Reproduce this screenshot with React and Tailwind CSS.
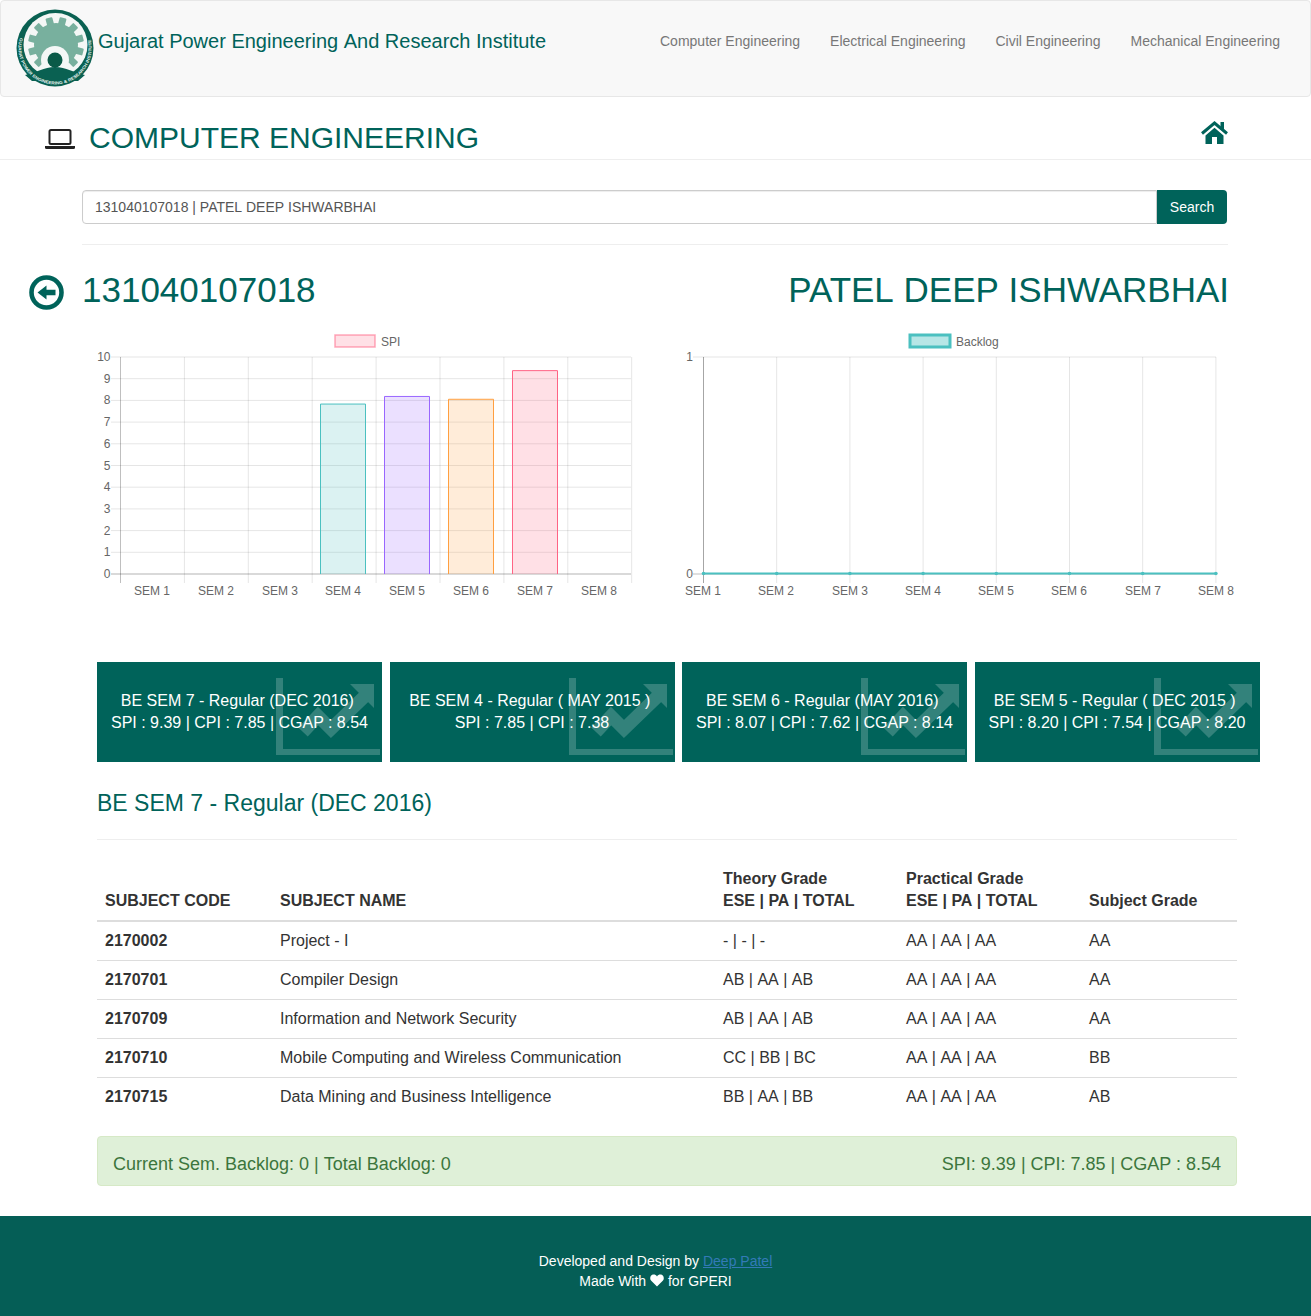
import React from "react";

const TEAL = "#00635a";
const FONT = "[font-family:'Liberation_Sans',Arial,sans-serif]";
const SEMS = ["SEM 1", "SEM 2", "SEM 3", "SEM 4", "SEM 5", "SEM 6", "SEM 7", "SEM 8"];
const LEFT_X = [134, 198, 262, 325, 389, 453, 517, 581];
const RIGHT_X = [685, 758, 832, 905, 978, 1051, 1125, 1198];
const nb = (s) => s.replace(/ /g, "\u00a0");

function Logo() {
  const teeth = Array.from({ length: 12 }, (_, i) => i * 30);
  return (
    <svg width="78" height="78" viewBox="0 0 78 78" className="shrink-0">
      <defs>
        <path id="ringText" d="M 3.9 28.9 A 36.5 36.5 0 1 0 74.1 28.9" />
      </defs>
      <circle cx="39" cy="39" r="38.5" fill="#0a6152" />
      <circle cx="39.5" cy="36" r="32" fill="#f4f7f6" />
      <g fill="#78b09e">
        <circle cx="40" cy="36" r="22" />
        {teeth.map((a) => (
          <rect key={a} x="36.5" y="8" width="7" height="9" rx="1" transform={`rotate(${a + 15} 40 36)`} />
        ))}
      </g>
      <circle cx="39" cy="51" r="14" fill="#f4f7f6" />
      <path d="M9 66 C20 64 28 58 39 58 C50 58 58 64 69 66 L62 72 L16 72 Z" fill="#0a6152" />
      <circle cx="39" cy="51" r="7.5" fill="#0a5a48" />
      <text fontSize="4.2" fontWeight="700" fill="#e8f2ef" fontFamily="'Liberation Sans', sans-serif">
        <textPath href="#ringText" textLength="133" lengthAdjust="spacingAndGlyphs">GUJARAT POWER ENGINEERING &amp; RESEARCH INSTITUTE</textPath>
      </text>
    </svg>
  );
}

function Laptop() {
  return (
    <svg width="30" height="20" viewBox="0 0 30 20" className="shrink-0">
      <rect x="4.5" y="1" width="21" height="14" rx="1.5" fill="none" stroke="#222" strokeWidth="2" />
      <path d="M0 17 H30 V18.5 Q30 20 28.5 20 H1.5 Q0 20 0 18.5 Z" fill="#222" />
    </svg>
  );
}

function Home() {
  return (
    <svg width="27" height="23" viewBox="0 0 27 23" className="block">
      <rect x="19.5" y="1" width="3.5" height="8" fill={TEAL} />
      <path d="M1 12.5 L13.5 2 L26 12.5" fill="none" stroke={TEAL} strokeWidth="3" />
      <path d="M4.5 14.5 L13.5 6.8 L22.5 14.5 V23 H16 V16 H11 V23 H4.5 Z" fill={TEAL} />
    </svg>
  );
}

function Back() {
  return (
    <svg width="35" height="35" viewBox="0 0 35 35" className="mt-[4px] shrink-0">
      <circle cx="17.5" cy="17.5" r="15" fill="none" stroke={TEAL} strokeWidth="4.6" />
      <path d="M8.5 17.5 L17.5 10.5 V14.8 H26.5 V20.2 H17.5 V24.5 Z" fill={TEAL} />
    </svg>
  );
}

function Trend() {
  return (
    <svg className="absolute left-[179px] top-[16px] pointer-events-none" width="106" height="78" viewBox="0 0 106 78">
      <g opacity="0.2">
        <path d="M0 0 H7 V71 H104 V77 H0 Z" fill="#fff" />
        <path d="M27 54 L42 38 L55 51 L89 18" fill="none" stroke="#fff" strokeWidth="13" />
        <path d="M74 6 H98 V30 Z" fill="#fff" />
      </g>
    </svg>
  );
}

function Heart() {
  return (
    <svg width="14" height="13" viewBox="0 0 15 14" className="inline-block align-[-1px]">
      <path d="M7.5 13.5 L1.3 7.4 C-0.5 5.4 0 2.3 2 1.1 C3.9 0 6.3 0.6 7.5 2.6 C8.7 0.6 11.1 0 13 1.1 C15 2.3 15.5 5.4 13.7 7.4 Z" fill="#fff" />
    </svg>
  );
}

function SpiChart() {
  const x0 = 120.5, y0 = 574, stepX = 63.9, stepY = 21.7;
  const bars = [
    [3, 7.85, "75,192,192"],
    [4, 8.2, "153,102,255"],
    [5, 8.07, "255,159,64"],
    [6, 9.39, "255,99,132"],
  ];
  return (
    <svg width="573" height="300" viewBox="82 325 573 300" className="shrink-0 block">
      <rect x="335" y="335" width="40" height="12" fill="rgba(255,99,132,0.2)" stroke="rgba(255,99,132,0.55)" strokeWidth="1.5" />
      <text x="381" y="345.5" fontSize="12" fill="#666">SPI</text>
      {Array.from({ length: 11 }, (_, i) => (
        <g key={i}>
          <line x1="111" x2="631" y1={y0 - i * stepY} y2={y0 - i * stepY} stroke={i === 0 ? "rgba(0,0,0,0.3)" : "rgba(0,0,0,0.1)"} />
          <text x="110.5" y={y0 - i * stepY + 4} fontSize="12" fill="#666" textAnchor="end">{i}</text>
        </g>
      ))}
      {Array.from({ length: 9 }, (_, i) => (
        <line key={i} x1={x0 + i * stepX} x2={x0 + i * stepX} y1="357" y2="583" stroke={i === 0 ? "rgba(0,0,0,0.25)" : "rgba(0,0,0,0.1)"} />
      ))}
      {bars.map(([i, v, c]) => {
        const top = y0 - v * stepY + 0.4;
        const left = Math.floor(x0 + stepX * (i + 0.5) - 23.5) + 0.5;
        return (
          <path key={i} d={`M${left} ${y0} V${top} H${left + 45} V${y0}`} fill={`rgba(${c},0.2)`} stroke={`rgb(${c})`} />
        );
      })}
      {SEMS.map((s, i) => (
        <text key={s} x={LEFT_X[i]} y="595" fontSize="12" fill="#666">{s}</text>
      ))}
    </svg>
  );
}

function BacklogChart() {
  const x0 = 703.5, stepX = 73.2;
  return (
    <svg width="585" height="300" viewBox="655 325 585 300" className="shrink-0 block">
      <rect x="910" y="335" width="40" height="12" fill="rgba(75,192,192,0.4)" stroke="#4bc0c0" strokeWidth="3" />
      <text x="956" y="345.5" fontSize="12" fill="#666">Backlog</text>
      <line x1="693" x2="1216" y1="357" y2="357" stroke="rgba(0,0,0,0.1)" />
      <line x1="693" x2="1216" y1="574" y2="574" stroke="rgba(0,0,0,0.25)" />
      <text x="693" y="361" fontSize="12" fill="#666" textAnchor="end">1</text>
      <text x="693" y="578" fontSize="12" fill="#666" textAnchor="end">0</text>
      {SEMS.map((s, i) => (
        <g key={s}>
          <line x1={x0 + i * stepX} x2={x0 + i * stepX} y1="357" y2="583" stroke={i === 0 ? "rgba(0,0,0,0.35)" : "rgba(0,0,0,0.1)"} />
          <text x={RIGHT_X[i]} y="595" fontSize="12" fill="#666">{s}</text>
        </g>
      ))}
      <line x1={x0} x2={x0 + 7 * stepX} y1="573.5" y2="573.5" stroke="#4bc0c0" strokeWidth="2" />
      {SEMS.map((s, i) => (
        <circle key={s} cx={x0 + i * stepX} cy="573.5" r="1.8" fill="#4bc0c0" />
      ))}
    </svg>
  );
}

const CARDS = [
  ["BE SEM 7 - Regular (DEC 2016)", "SPI : 9.39 | CPI : 7.85 | CGAP : 8.54"],
  ["BE SEM 4 - Regular ( MAY 2015 )", "SPI : 7.85 | CPI : 7.38"],
  ["BE SEM 6 - Regular (MAY 2016)", "SPI : 8.07 | CPI : 7.62 | CGAP : 8.14"],
  ["BE SEM 5 - Regular ( DEC 2015 )", "SPI : 8.20 | CPI : 7.54 | CGAP : 8.20"],
];

const ROWS = [
  ["2170002", "Project - I", "- | - | -", "AA | AA | AA", "AA"],
  ["2170701", "Compiler Design", "AB | AA | AB", "AA | AA | AA", "AA"],
  ["2170709", "Information and Network Security", "AB | AA | AB", "AA | AA | AA", "AA"],
  ["2170710", "Mobile Computing and Wireless Communication", "CC | BB | BC", "AA | AA | AA", "BB"],
  ["2170715", "Data Mining and Business Intelligence", "BB | AA | BB", "AA | AA | AA", "AB"],
];

export default function App() {
  return (
    <div className={`${FONT} w-full bg-white text-[14px] leading-[20px] text-[#333]`}>
      <header className="flex h-[97px] items-start justify-between rounded border border-[#e7e7e7] bg-[#f8f8f8] pr-[30px]">
        <div className="flex items-start pl-[15px] pt-[8px]">
          <Logo />
          <span className="ml-[4px] mt-[19px] text-[20px] leading-[26px] text-[#00635a]">
            {nb("Gujarat Power Engineering And Research Institute")}
          </span>
        </div>
        <nav className="flex gap-[30px] pt-[30px] text-[#777]">
          <a>Computer Engineering</a>
          <a>Electrical Engineering</a>
          <a>Civil Engineering</a>
          <a>Mechanical Engineering</a>
        </nav>
      </header>

      <div className="flex h-[63px] items-end justify-between border-b border-[#eee] pb-[5px] pl-[45px] pr-[83px]">
        <div className="flex items-center text-[#00635a]">
          <div className="mt-[2px]">
            <Laptop />
          </div>
          <h2 className="ml-[14px] text-[30px] leading-[33px]">COMPUTER ENGINEERING</h2>
        </div>
        <div className="mb-[10px]">
          <Home />
        </div>
      </div>

      <div className="ml-[82px] mr-[84px] mt-[30px] flex h-[34px]">
        <input
          readOnly
          value={nb("131040107018 | PATEL DEEP ISHWARBHAI")}
          className="h-full flex-1 rounded-l border border-[#ccc] bg-white px-[12px] text-[14px] text-[#555] shadow-[inset_0_1px_1px_rgba(0,0,0,0.075)] outline-none"
        />
        <button className="h-full w-[70px] rounded-r bg-[#00635a] text-[14px] text-white">Search</button>
      </div>
      <div className="ml-[82px] mr-[83px] mt-[20px] border-t border-[#eee]" />

      <div className="ml-[29px] mr-[82px] mt-[25px] flex h-[40px] items-center justify-between text-[35px] leading-[40px] text-[#00635a]">
        <div className="flex items-center">
          <Back />
          <span className="ml-[18px]">131040107018</span>
        </div>
        <span>{nb("PATEL DEEP ISHWARBHAI")}</span>
      </div>

      <div className="ml-[82px] mt-[15px] flex">
        <SpiChart />
        <BacklogChart />
      </div>

      <div className="ml-[97px] mt-[37px] flex gap-[7.5px]">
        {CARDS.map(([a, b]) => (
          <div key={a} className="relative flex h-[100px] w-[285px] flex-col items-center justify-center bg-[#00635a] text-center text-[16px] leading-[22px] text-white">
            <Trend />
            <div className="relative">{a}{"\u00a0"}</div>
            <div className="relative">{b}</div>
          </div>
        ))}
      </div>

      <div className="ml-[97px] mr-[74px]">
        <h3 className="mt-[28px] text-[23px] leading-[26px] text-[#00635a]">{nb("BE SEM 7 - Regular (DEC 2016)")}</h3>
        <div className="mt-[23px] border-t border-[#eee]" />
        <table className="mt-[20px] w-full table-fixed text-[16px] leading-[22px]">
          <colgroup>
            <col className="w-[175px]" />
            <col className="w-[443px]" />
            <col className="w-[183px]" />
            <col className="w-[183px]" />
            <col className="w-[156px]" />
          </colgroup>
          <thead>
            <tr className="border-b-2 border-[#ddd] text-left align-bottom font-bold">
              <th className="p-[8px]">{nb("SUBJECT CODE")}</th>
              <th className="p-[8px]">{nb("SUBJECT NAME")}</th>
              <th className="p-[8px]">{nb("Theory Grade")}<br />{nb("ESE | PA | TOTAL")}</th>
              <th className="p-[8px]">{nb("Practical Grade")}<br />{nb("ESE | PA | TOTAL")}</th>
              <th className="p-[8px]">{nb("Subject Grade")}</th>
            </tr>
          </thead>
          <tbody>
            {ROWS.map((r, i) => (
              <tr key={r[0]} className={i === 0 ? "" : "border-t border-[#ddd]"}>
                <td className="p-[8px] font-bold">{r[0]}</td>
                <td className="p-[8px]">{nb(r[1])}</td>
                <td className="p-[8px]">{nb(r[2])}</td>
                <td className="p-[8px]">{nb(r[3])}</td>
                <td className="p-[8px]">{r[4]}</td>
              </tr>
            ))}
          </tbody>
        </table>

        <div className="mt-[20px] flex h-[50px] items-center justify-between rounded border border-[#d6e9c6] bg-[#dff0d8] px-[15px] pt-[5px] text-[18px] text-[#3c763d]">
          <span>{nb("Current Sem. Backlog: 0 | Total Backlog: 0")}</span>
          <span>SPI: 9.39 | CPI: 7.85 | CGAP : 8.54</span>
        </div>
      </div>

      <footer className="mt-[30px] h-[100px] bg-[#055e56] pt-[35px] text-center text-white">
        <div>
          Developed and Design by <a className="text-[#337ab7] underline">Deep Patel</a>
        </div>
        <div>
          Made With <Heart /> for GPERI
        </div>
      </footer>
    </div>
  );
}
